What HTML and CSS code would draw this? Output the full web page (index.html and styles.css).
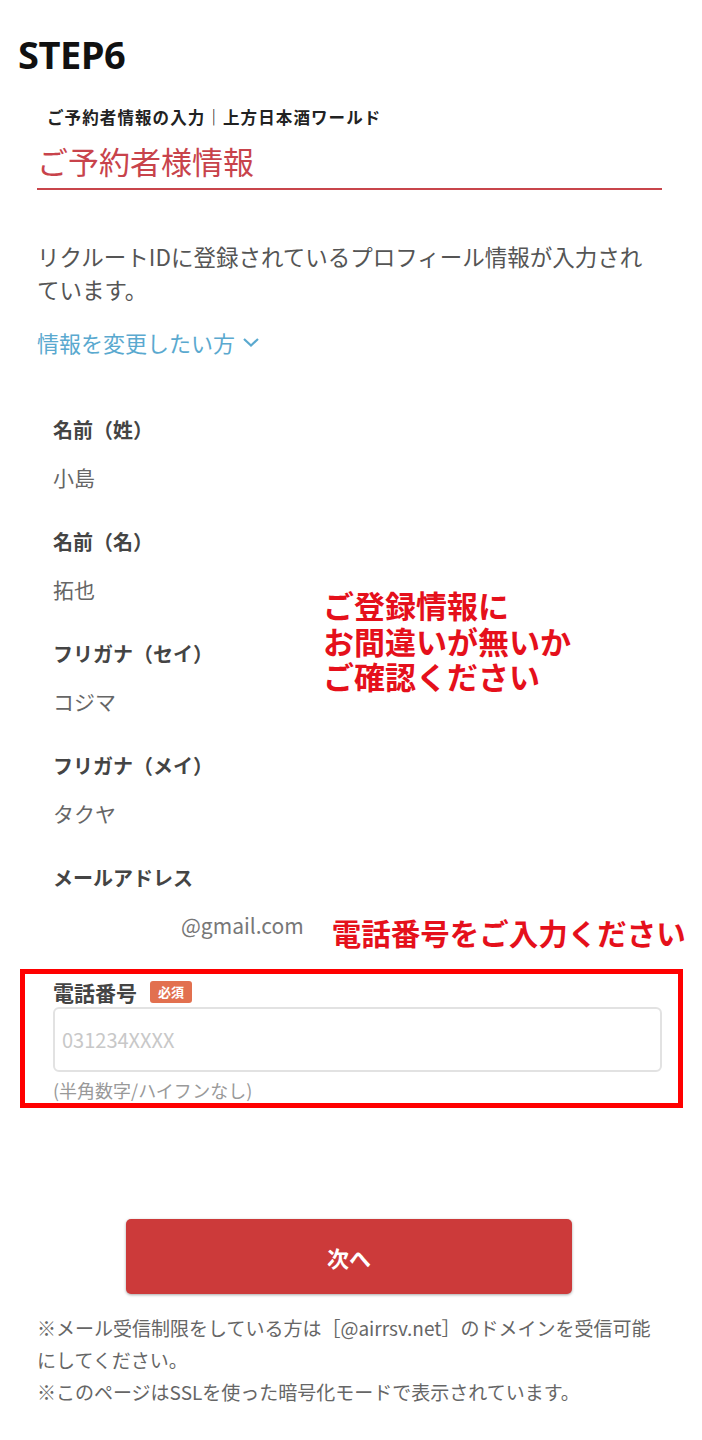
FILE: index.html
```html
<!DOCTYPE html>
<html lang="ja"><head>
<meta charset="utf-8">
<title>ご予約者情報の入力｜上方日本酒ワールド</title>
<meta name="viewport" content="width=device-width, initial-scale=1">
<link rel="stylesheet" href="styles.css">
</head><body>
<div class="step">STEP6</div>
<div class="content">
<div class="site-title">ご予約者情報の入力｜上方日本酒ワールド</div>
<h2 class="heading">ご予約者様情報</h2>
<p class="lead">リクルートIDに登録されているプロフィール情報が入力されています。</p>
<a class="toggle" href="#">情報を変更したい方<svg width="18" height="11" viewBox="0 0 18 11"><path d="M2 2 L9 8.5 L16 2" fill="none" stroke="#5aa9cf" stroke-width="2.2"/></svg></a>

<div class="info">
  <div class="field">
    <div class="label">名前（姓）</div>
    <div class="value">小島</div>
  </div>
  <div class="field">
    <div class="label">名前（名）</div>
    <div class="value">拓也</div>
  </div>
  <div class="field">
    <div class="label">フリガナ（セイ）</div>
    <div class="value">コジマ</div>
  </div>
  <div class="field">
    <div class="label">フリガナ（メイ）</div>
    <div class="value">タクヤ</div>
  </div>
  <div class="field last">
    <div class="label">メールアドレス</div>
    <div class="mail-row">
      <div class="value mail">@gmail.com</div>
      <div class="note-red phone-note">電話番号をご入力ください</div>
    </div>
  </div>
  <div class="note-red check-note">
    <div>ご登録情報に</div>
    <div>お間違いが無いか</div>
    <div>ご確認ください</div>
  </div>
</div>

<div class="phone-box">
  <div class="phone-label">電話番号<span class="badge">必須</span></div>
  <input class="phone-input" type="tel" placeholder="031234XXXX">
  <div class="hint">(半角数字/ハイフンなし)</div>
</div>

<button class="next-btn" type="button">次へ</button>

<p class="notes">※メール受信制限をしている方は［@airrsv.net］のドメインを受信可能にしてください。<br>※このページはSSLを使った暗号化モードで表示されています。</p>
</div>
</body></html>
```

FILE: styles.css
```css
body { margin: 0; background: #fff; font-family: "Noto Sans CJK JP", "Noto Sans", sans-serif; color: #555; }
.step { padding: 32px 0 0 18px; font-family: "Open Sans", "Noto Sans CJK JP", sans-serif; font-weight: 700; font-size: 38px; line-height: 44px; color: #111; letter-spacing: -0.5px; }
.content { padding: 0 40px 40px 37px; }
.site-title { margin: 31px 0 0 10px; font-size: 16.5px; line-height: 20px; font-weight: 700; color: #222; letter-spacing: 1.1px; }
.heading { margin: 14px 0 0; padding-bottom: 7px; border-bottom: 2px solid #c8454b; font-size: 31px; line-height: 40px; font-weight: 400; color: #c8434b; }
.lead { width: 615px; margin: 50px 0 0; font-size: 22.5px; line-height: 33px; color: #555; }
.toggle { display: inline-flex; align-items: center; gap: 7px; margin-top: 21px; font-size: 22px; line-height: 30px; color: #5aa9cf; text-decoration: none; }
.info { position: relative; margin-top: 59px; padding-left: 16px; }
.field { margin-bottom: 37px; }
.field.last { margin-bottom: 0; }
.label { font-size: 20px; line-height: 28px; font-weight: 700; color: #444; }
.value { margin-top: 19px; font-size: 21px; line-height: 28px; color: #666; }
.mail-row { display: flex; align-items: flex-start; gap: 28px; }
.value.mail { padding-left: 128px; font-size: 21px; color: #777; }
.note-red { font-weight: 700; color: #e5101b; white-space: nowrap; }
.phone-note { margin-top: 22px; font-size: 29.5px; line-height: 36px; }
.check-note { position: absolute; left: 286px; top: 171px; display: flex; flex-direction: column; font-size: 31px; line-height: 35.5px; }
.check-note div { height: 35.5px; }
.phone-box { margin: 19px -21px 0 -17px; padding: 6px 16px 2px 28px; border: 5px solid #f00; }
.phone-label { display: flex; align-items: center; gap: 13px; font-size: 21px; line-height: 24px; font-weight: 700; color: #444; }
.badge { display: inline-block; width: 42px; height: 22px; line-height: 22px; text-align: center; border-radius: 3px; background: #e2704f; color: #fff; font-size: 13px; font-weight: 700; }
.phone-input { display: block; width: 100%; height: 65px; margin-top: 3px; padding: 0 7px; box-sizing: border-box; border: 2px solid #e2e2e2; border-radius: 6px; font-family: inherit; font-size: 20px; color: #333; background: #fff; }
.phone-input::placeholder { color: #c8c8c8; }
.hint { margin-top: 7px; font-size: 18px; line-height: 22px; color: #999; }
.next-btn { display: block; width: 446px; height: 75px; margin: 111px 0 0 89px; border: none; border-radius: 5px; background: #cc3a3a; color: #fff; font-family: inherit; font-size: 22px; font-weight: 700; box-shadow: 0 1px 3px rgba(0,0,0,0.35); cursor: pointer; }
.notes { margin: 18px 0 0; font-size: 19px; line-height: 32px; color: #666; }
```
